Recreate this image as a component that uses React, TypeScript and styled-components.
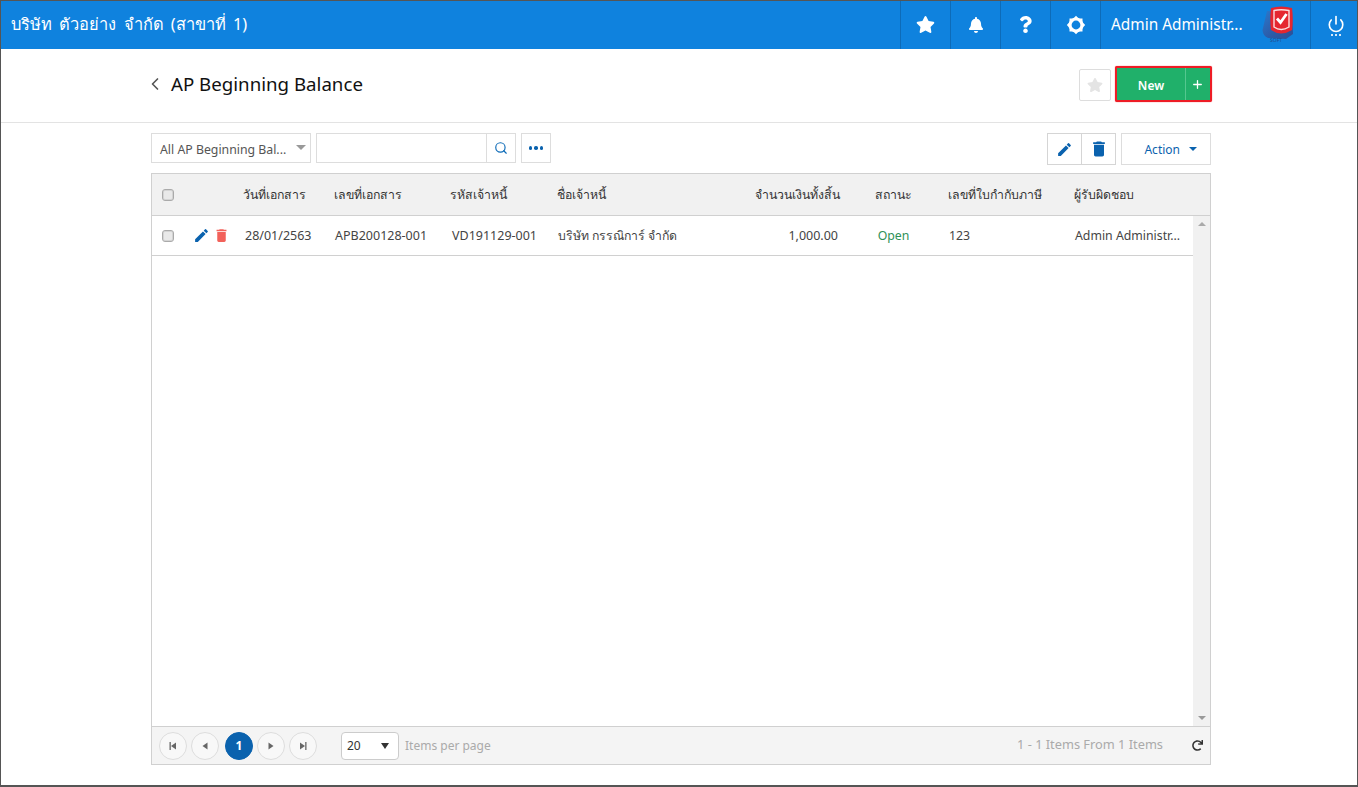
import React from "react";
import styled, { createGlobalStyle } from "styled-components";
import { FaStar, FaBell, FaQuestion, FaRedo } from "react-icons/fa";
import { MdEdit, MdDelete } from "react-icons/md";
import { Search, Power, ChevronLeft, Plus } from "lucide-react";

const THAI = `"Noto Sans", "Open Sans", "Noto Sans CJK SC", "DejaVu Sans", sans-serif`;

const Global = createGlobalStyle`
  * { box-sizing: border-box; }
  html, body { margin: 0; padding: 0; background: #fff; }
  body { font-family: ${THAI}; font-size: 12.3px; color: #444; }
`;

const Frame = styled.div`
  width: 1358px; height: 787px; border: 1px solid #555; border-bottom-width: 2px;
  background: #fff; display: flex; flex-direction: column; overflow: hidden;
`;
const TopBar = styled.header`
  height: 48px; flex: none; background: #0f82de; color: #fff; display: flex; align-items: stretch;
`;
const Brand = styled.div`
  flex: 1; font-size: 16.4px; word-spacing: 3px; padding: 0 0 2px 10px; display: flex; align-items: center; white-space: nowrap;
`;
const NavCell = styled.div`
  width: 50px; border-left: 1px solid #0d6bb8; display: flex; align-items: center; justify-content: center; font-size: 19px; padding-bottom: 1px;
`;
const UserCell = styled.div`
  width: 210px; border-left: 1px solid #0d6bb8; display: flex; align-items: center; padding: 0 0 1px 10px; font-size: 15.4px;
`;
const UserName = styled.span`
  width: 130px; white-space: nowrap;
`;
const Logo = styled.svg`
  margin-left: 21px; margin-top: 2px; flex: none;
`;
const PowerCell = styled.div`
  width: 47px; border-left: 1px solid #0d6bb8; display: flex; flex-direction: column; align-items: center; justify-content: center; padding-left: 3px;
`;
const Dots = styled.div`
  display: flex; gap: 2px; margin-top: 1px;
`;
const PowerDot = styled.i`
  width: 2px; height: 2px; background: #d5e8f8;
`;
const TitleBar = styled.div`
  height: 74px; flex: none; border-bottom: 1px solid #e3e3e3; display: flex; align-items: center; padding: 0 146px 4px 150px;
`;
const BackIcon = styled(ChevronLeft)`
  color: #555; margin-left: -6px; margin-right: 6px;
`;
const Title = styled.h1`
  flex: 1; margin: 0; font-size: 18.7px; font-weight: 400; color: #111; white-space: nowrap;
`;
const FavButton = styled.div`
  width: 32px; height: 32px; border: 1px solid #ddd; border-radius: 2px; display: flex; align-items: center; justify-content: center; color: #e4e4e4; font-size: 16px; margin: 2px 4px 0 0;
`;
const NewHighlight = styled.div`
  width: 97px; height: 36px; border: 2px solid #ee1c25; border-radius: 2px; margin-right: -1px; display: flex; background: #20b06a; color: #fff; box-shadow: 0 0 1px #ee1c25;
`;
const NewLabel = styled.div`
  flex: 1; display: flex; align-items: center; justify-content: center; font-weight: 600; font-size: 12px; padding-top: 3px; border-right: 1px solid #55c78f;
`;
const NewPlus = styled.div`
  width: 24px; display: flex; align-items: center; justify-content: center; padding: 2px 2px 0 0;
`;
const Content = styled.main`
  flex: 1; padding: 10px 146px 0 150px; display: flex; flex-direction: column; min-height: 0;
`;
const Toolbar = styled.div`
  height: 32px; flex: none; display: flex; align-items: flex-start; gap: 5px;
`;
const ViewSelect = styled.div`
  width: 160px; height: 30px; border: 1px solid #ddd; display: flex; align-items: center; padding: 2px 8px 0; color: #555; position: relative; white-space: nowrap;
`;
const SelectCaret = styled.span`
  position: absolute; right: 4px; top: 11px; border-left: 5px solid transparent; border-right: 5px solid transparent; border-top: 5px solid #999;
`;
const SearchBox = styled.div`
  width: 200px; height: 30px; border: 1px solid #ddd; display: flex; justify-content: flex-end;
`;
const SearchBtn = styled.div`
  width: 29px; border-left: 1px solid #ddd; display: flex; align-items: center; justify-content: center; color: #0f6cb8;
`;
const MoreBtn = styled.div`
  width: 30px; height: 30px; border: 1px solid #ddd; display: flex; align-items: center; justify-content: center; gap: 2px;
`;
const Dot = styled.i`
  width: 3.5px; height: 3.5px; border-radius: 50%; background: #0a62ae;
`;
const Spacer = styled.div`
  flex: 1;
`;
const IconGroup = styled.div`
  width: 69px; height: 32px; border: 1px solid #d5d5d5; display: flex;
`;
const IconBtn = styled.div`
  flex: 1; display: flex; align-items: center; justify-content: center; color: #0a62ae; font-size: 17px;
  & + & { border-left: 1px solid #d5d5d5; }
`;
const ActionBtn = styled.div`
  width: 90px; height: 32px; border: 1px solid #ddd; display: flex; align-items: center; justify-content: flex-end; padding-right: 13px; gap: 9px; color: #0a62ae; font-size: 12px;
`;
const ActionCaret = styled.span`
  border-left: 4px solid transparent; border-right: 4px solid transparent; border-top: 4px solid #0a62ae;
`;
const Table = styled.section`
  margin-top: 8px; width: 1060px; height: 592px; border: 1px solid #d0d0d0; display: flex; flex-direction: column;
`;
const COLS = "36px 48px 91px 116px 107px 150px 146px 95px 126px 126px";
const HeadRow = styled.div`
  height: 42px; flex: none; background: #f1f1f1; border-bottom: 1px solid #d0d0d0; display: grid; grid-template-columns: ${COLS} 1fr; align-items: center; color: #333; font-size: 12.3px;
`;
const HeadCell = styled.div<{ $align?: string; $pad?: number }>`
  text-align: ${(p) => p.$align || "left"}; padding: 0 ${(p) => (p.$align === "right" ? 6 : 0)}px 0 ${(p) => p.$pad ?? 7}px; white-space: nowrap;
`;
const Body = styled.div`
  flex: 1; display: flex; min-height: 0;
`;
const Rows = styled.div`
  flex: 1;
`;
const Row = styled.div`
  height: 40px; border-bottom: 1px solid #d0d0d0; display: grid; grid-template-columns: ${COLS}; align-items: center; color: #444;
`;
const Cell = styled.div<{ $align?: string; $color?: string; $pad?: number; $size?: number }>`
  padding: 0 8px 0 ${(p) => p.$pad ?? 8}px; text-align: ${(p) => p.$align || "left"}; color: ${(p) => p.$color || "inherit"}; white-space: nowrap;
  ${(p) => (p.$size ? `font-size: ${p.$size}px;` : "")}
`;
const CheckCell = styled.div`
  display: flex; padding-left: 10px;
`;
const Check = styled.span`
  width: 12px; height: 12px; border: 1px solid #aaa; border-radius: 3px; background: #e9e9e9; box-shadow: inset 0 0 0 1px #d4d4d4; display: block;
`;
const RowActions = styled.div`
  display: flex; align-items: center; font-size: 17px; padding-left: 5px; gap: 3px; color: #0a62ae;
`;
const RedIcon = styled(MdDelete)`
  color: #f2615a;
`;
const Scrollbar = styled.div`
  width: 17px; background: #f1f1f1; display: flex; flex-direction: column; justify-content: space-between; align-items: center; padding: 6px 0;
`;
const Arrow = styled.span<{ $up?: boolean }>`
  border-left: 4px solid transparent; border-right: 4px solid transparent;
  ${(p) => (p.$up ? "border-bottom: 4px solid #aaa;" : "border-top: 4px solid #999;")}
`;
const Footer = styled.footer`
  height: 38px; flex: none; background: #f4f4f4; border-top: 1px solid #d0d0d0; display: flex; align-items: center; padding-left: 7px; color: #aaa; font-size: 12px;
`;
const PageBtn = styled.div<{ $active?: boolean; $gap?: number }>`
  width: 28px; height: 28px; border-radius: 50%; border: 1px solid ${(p) => (p.$active ? "#0a62ae" : "#ddd")}; background: ${(p) => (p.$active ? "#0a62ae" : "#f8f8f8")}; color: #fff; font-weight: 700; display: flex; align-items: center; justify-content: center; margin-right: ${(p) => p.$gap ?? 4}px;
`;
const SizeSelect = styled.div`
  width: 58px; height: 28px; margin-left: 20px; background: #fff; border: 1px solid #ccc; border-radius: 4px; display: flex; align-items: center; justify-content: space-between; padding: 0 9px 0 5px; color: #333; font-size: 12px;
`;
const SizeCaret = styled.span`
  border-left: 4px solid transparent; border-right: 4px solid transparent; border-top: 6px solid #333;
`;
const PerPage = styled.span`
  margin-left: 6px;
`;
const Range = styled.span`
  margin-left: auto; margin-right: 29px; font-size: 12.8px; padding-bottom: 3px;
`;
const Reload = styled.div`
  width: 18px; display: flex; color: #333; font-size: 11px;
`;

const PagerIcon = ({ d, bar }: { d: string; bar?: number }) => (
  <svg width="10" height="10" viewBox="0 0 10 10" fill="#666">
    <path d={d} />
    {bar !== undefined && <rect x={bar} y="1" width="1.3" height="8" />}
  </svg>
);

const GEAR_ANGLES = [0, 45, 90, 135, 180, 225, 270, 315];

const GearIcon = () => (
  <svg width="20" height="20" viewBox="0 0 20 20" fill="#fff">
    <circle cx="10" cy="10" r="6" fill="none" stroke="#fff" strokeWidth="3.2" />
    {GEAR_ANGLES.map((a) => (
      <path key={a} d="M7.6 3.2 10 0.8 12.4 3.2Z" transform={`rotate(${a} 10 10)`} />
    ))}
  </svg>
);

const BrandLogo = () => (
  <Logo width="36" height="40" viewBox="0 0 36 40">
    <defs>
      <linearGradient id="shade" x1="0" y1="0" x2="1" y2="1">
        <stop offset="0" stopColor="#2a78cc" />
        <stop offset="0.6" stopColor="#2c5aa6" />
        <stop offset="1" stopColor="#2c4f96" />
      </linearGradient>
    </defs>
    <path d="M5 5 L30 6 L31 28 L24 33 L6 32 Q1 30 0.5 24 Z" fill="url(#shade)" />
    <path d="M9 2 Q19 -1 30 2 Q31.5 14 30 24 Q19 31 9 24 Q7.5 14 9 2Z" fill="#e5262f" />
    <path d="M12 4.5 Q19 3 27 4.5 L27 21 Q19 26 12 21Z" fill="none" stroke="#fbdcdc" strokeWidth="1.4" />
    <path d="M15 12.5 L18.5 16.5 L24.5 8" fill="none" stroke="#fff" strokeWidth="2.8" />
    <text x="8" y="36" fontSize="5" fill="#254a8c">SOFT</text>
  </Logo>
);

export default function App() {
  return (
    <>
      <Global />
      <Frame>
        <TopBar>
          <Brand>บริษัท ตัวอย่าง จำกัด (สาขาที่ 1)</Brand>
          <NavCell><FaStar /></NavCell>
          <NavCell><FaBell size={16} /></NavCell>
          <NavCell><FaQuestion size={17} /></NavCell>
          <NavCell><GearIcon /></NavCell>
          <UserCell>
            <UserName>Admin Administr...</UserName>
            <BrandLogo />
          </UserCell>
          <PowerCell>
            <Power size={18} strokeWidth={2.2} />
            <Dots><PowerDot /><PowerDot /><PowerDot /></Dots>
          </PowerCell>
        </TopBar>
        <TitleBar>
          <BackIcon size={20} strokeWidth={2} />
          <Title>AP Beginning Balance</Title>
          <FavButton><FaStar /></FavButton>
          <NewHighlight>
            <NewLabel>New</NewLabel>
            <NewPlus><Plus size={13} strokeWidth={2.4} /></NewPlus>
          </NewHighlight>
        </TitleBar>
        <Content>
          <Toolbar>
            <ViewSelect>All AP Beginning Bal...<SelectCaret /></ViewSelect>
            <SearchBox><SearchBtn><Search size={14} strokeWidth={2} /></SearchBtn></SearchBox>
            <MoreBtn><Dot /><Dot /><Dot /></MoreBtn>
            <Spacer />
            <IconGroup>
              <IconBtn><MdEdit /></IconBtn>
              <IconBtn><MdDelete size={20} /></IconBtn>
            </IconGroup>
            <ActionBtn>Action<ActionCaret /></ActionBtn>
          </Toolbar>
          <Table>
            <HeadRow>
              <CheckCell><Check /></CheckCell>
              <div />
              <HeadCell>วันที่เอกสาร</HeadCell>
              <HeadCell>เลขที่เอกสาร</HeadCell>
              <HeadCell>รหัสเจ้าหนี้</HeadCell>
              <HeadCell>ชื่อเจ้าหนี้</HeadCell>
              <HeadCell $align="right">จำนวนเงินทั้งสิ้น</HeadCell>
              <HeadCell $align="center" $pad={0}>สถานะ</HeadCell>
              <HeadCell>เลขที่ใบกำกับภาษี</HeadCell>
              <HeadCell>ผู้รับผิดชอบ</HeadCell>
            </HeadRow>
            <Body>
              <Rows>
                <Row>
                  <CheckCell><Check /></CheckCell>
                  <RowActions><MdEdit /><RedIcon /></RowActions>
                  <Cell $pad={9} $size={12.5}>28/01/2563</Cell>
                  <Cell $size={12.5}>APB200128-001</Cell>
                  <Cell $pad={9} $size={12.5}>VD191129-001</Cell>
                  <Cell $size={12.25}>บริษัท กรรณิการ์ จำกัด</Cell>
                  <Cell $align="right" $size={12.5}>1,000.00</Cell>
                  <Cell $align="center" $color="#2e9158">Open</Cell>
                  <Cell>123</Cell>
                  <Cell>Admin Administr...</Cell>
                </Row>
              </Rows>
              <Scrollbar><Arrow $up /><Arrow /></Scrollbar>
            </Body>
            <Footer>
              <PageBtn><PagerIcon d="M8 1.5V8.5L3 5Z" bar={1.5} /></PageBtn>
              <PageBtn $gap={6}><PagerIcon d="M7.5 1.5V8.5L2.5 5Z" /></PageBtn>
              <PageBtn $active>1</PageBtn>
              <PageBtn><PagerIcon d="M2.5 1.5V8.5L7.5 5Z" /></PageBtn>
              <PageBtn $gap={4}><PagerIcon d="M2 1.5V8.5L7 5Z" bar={7.2} /></PageBtn>
              <SizeSelect>20<SizeCaret /></SizeSelect>
              <PerPage>Items per page</PerPage>
              <Range>1 - 1 Items From 1 Items</Range>
              <Reload><FaRedo /></Reload>
            </Footer>
          </Table>
        </Content>
      </Frame>
    </>
  );
}
